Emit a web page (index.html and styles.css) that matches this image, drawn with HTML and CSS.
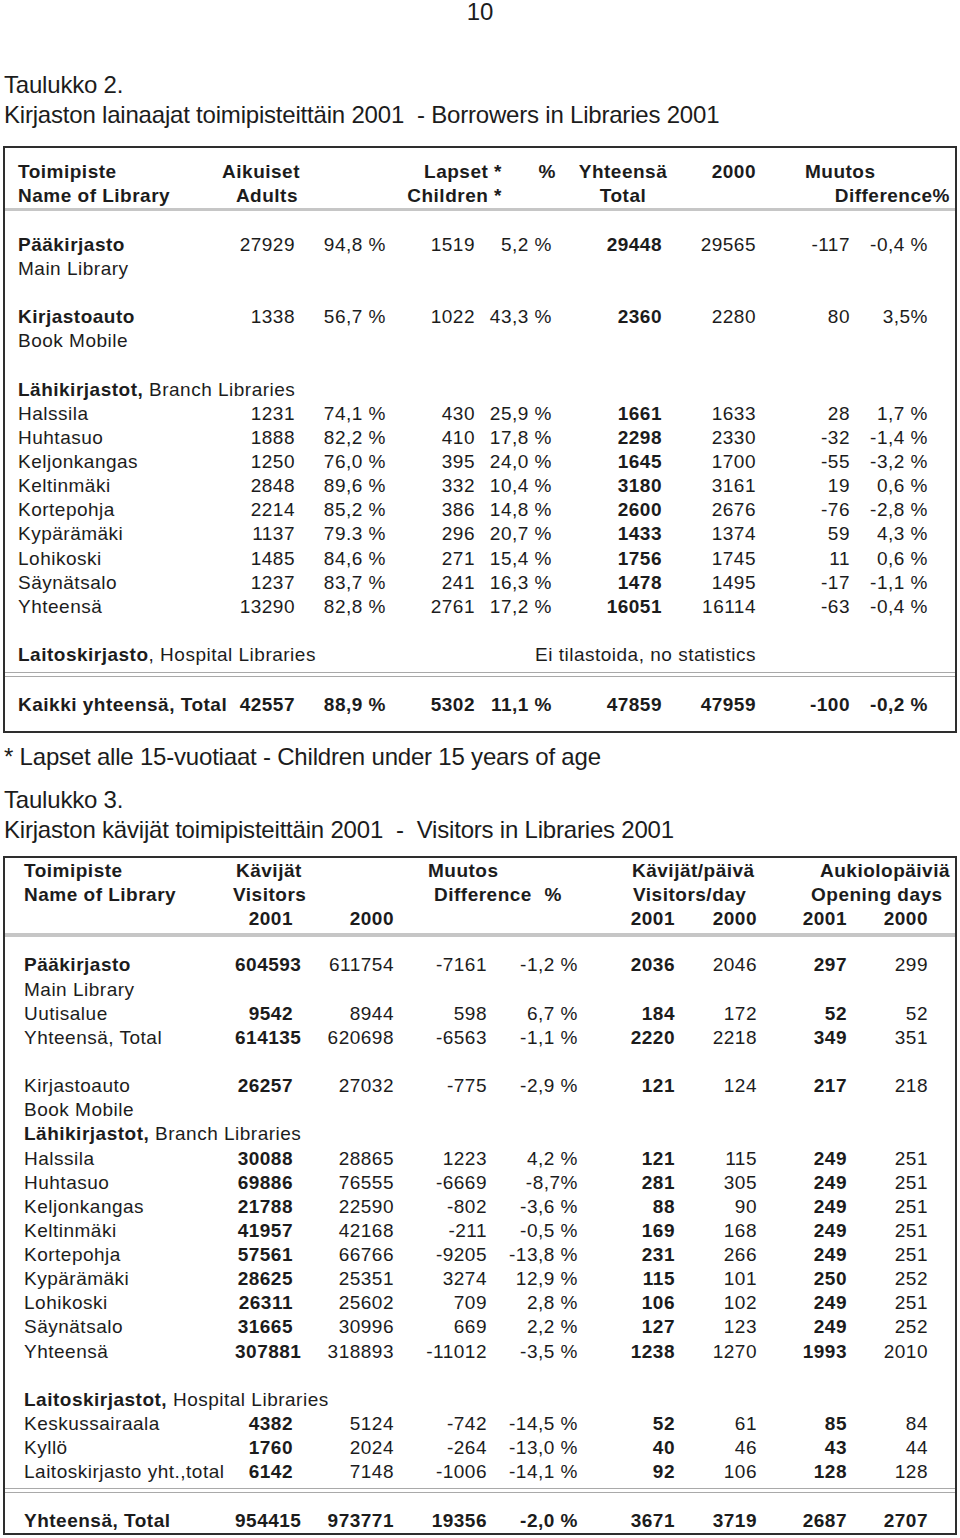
FILE: index.html
```html
<!DOCTYPE html>
<html lang="fi">
<head>
<meta charset="utf-8">
<title>Taulukko 2 ja 3</title>
<link rel="stylesheet" href="styles.css">
</head>
<body>
<div class="pageno">10</div>

<div class="caption cap1">
  <div>Taulukko 2.</div>
  <div>Kirjaston lainaajat toimipisteittäin 2001&nbsp; - Borrowers in Libraries 2001</div>
</div>

<section class="tbl t1">
  <div class="head">
    <span>Toimipiste</span><span class="r">Aikuiset</span><span class="r">Lapset *</span><span class="r">%</span><span class="c">Yhteensä</span><span class="r">2000</span><span class="muutos">Muutos</span>
    <span>Name of Library</span><span class="r adults">Adults</span><span class="r">Children *</span><span></span><span class="c">Total</span><span></span><span class="r">Difference%</span>
  </div>
  <div class="rule"></div>
  <div class="body">
    <span class="n b">Pääkirjasto</span><span>27929</span><span>94,8 %</span><span>1519</span><span>5,2 %</span><span class="b">29448</span><span>29565</span><span>-117</span><span>-0,4 %</span>
    <span class="full">Main Library</span>
    <span class="full"></span>
    <span class="n b">Kirjastoauto</span><span>1338</span><span>56,7 %</span><span>1022</span><span>43,3 %</span><span class="b">2360</span><span>2280</span><span>80</span><span>3,5%</span>
    <span class="full">Book Mobile</span>
    <span class="full"></span>
    <span class="full"><b>Lähikirjastot,</b> Branch Libraries</span>
    <span class="n">Halssila</span><span>1231</span><span>74,1 %</span><span>430</span><span>25,9 %</span><span class="b">1661</span><span>1633</span><span>28</span><span>1,7 %</span>
    <span class="n">Huhtasuo</span><span>1888</span><span>82,2 %</span><span>410</span><span>17,8 %</span><span class="b">2298</span><span>2330</span><span>-32</span><span>-1,4 %</span>
    <span class="n">Keljonkangas</span><span>1250</span><span>76,0 %</span><span>395</span><span>24,0 %</span><span class="b">1645</span><span>1700</span><span>-55</span><span>-3,2 %</span>
    <span class="n">Keltinmäki</span><span>2848</span><span>89,6 %</span><span>332</span><span>10,4 %</span><span class="b">3180</span><span>3161</span><span>19</span><span>0,6 %</span>
    <span class="n">Kortepohja</span><span>2214</span><span>85,2 %</span><span>386</span><span>14,8 %</span><span class="b">2600</span><span>2676</span><span>-76</span><span>-2,8 %</span>
    <span class="n">Kypärämäki</span><span>1137</span><span>79.3 %</span><span>296</span><span>20,7 %</span><span class="b">1433</span><span>1374</span><span>59</span><span>4,3 %</span>
    <span class="n">Lohikoski</span><span>1485</span><span>84,6 %</span><span>271</span><span>15,4 %</span><span class="b">1756</span><span>1745</span><span>11</span><span>0,6 %</span>
    <span class="n">Säynätsalo</span><span>1237</span><span>83,7 %</span><span>241</span><span>16,3 %</span><span class="b">1478</span><span>1495</span><span>-17</span><span>-1,1 %</span>
    <span class="n">Yhteensä</span><span>13290</span><span>82,8 %</span><span>2761</span><span>17,2 %</span><span class="b">16051</span><span>16114</span><span>-63</span><span>-0,4 %</span>
    <span class="full"></span>
    <span class="n laitos"><b>Laitoskirjasto</b>, Hospital Libraries</span><span class="eitil">Ei tilastoida, no statistics</span>
  </div>
  <div class="rule2"></div>
  <div class="body foot b">
    <span class="n">Kaikki yhteensä, Total</span><span>42557</span><span>88,9 %</span><span>5302</span><span>11,1 %</span><span>47859</span><span>47959</span><span>-100</span><span>-0,2 %</span>
  </div>
</section>

<div class="caption note">* Lapset alle 15-vuotiaat - Children under 15 years of age</div>

<div class="caption cap2">
  <div>Taulukko 3.</div>
  <div>Kirjaston kävijät toimipisteittäin 2001&nbsp; - &nbsp;Visitors in Libraries 2001</div>
</div>

<section class="tbl t2">
  <div class="head">
    <span>Toimipiste</span><span class="kav">Kävijät</span><span></span><span class="muu">Muutos</span><span></span><span class="kpv">Kävijät/päivä</span><span></span><span class="auk">Aukiolopäiviä</span><span></span>
    <span>Name of Library</span><span class="vis">Visitors</span><span></span><span class="dif">Difference</span><span class="r pct">%</span><span class="vpd">Visitors/day</span><span></span><span class="opd">Opening days</span><span></span>
    <span></span><span class="r">2001</span><span class="r">2000</span><span></span><span></span><span class="r">2001</span><span class="r">2000</span><span class="r">2001</span><span class="r">2000</span>
  </div>
  <div class="rule"></div>
  <div class="body">
    <span class="n b">Pääkirjasto</span><span class="b">604593</span><span>611754</span><span>-7161</span><span>-1,2 %</span><span class="b">2036</span><span>2046</span><span class="b">297</span><span>299</span>
    <span class="full">Main Library</span>
    <span class="n">Uutisalue</span><span class="b">9542</span><span>8944</span><span>598</span><span>6,7 %</span><span class="b">184</span><span>172</span><span class="b">52</span><span>52</span>
    <span class="n">Yhteensä, Total</span><span class="b">614135</span><span>620698</span><span>-6563</span><span>-1,1 %</span><span class="b">2220</span><span>2218</span><span class="b">349</span><span>351</span>
    <span class="full"></span>
    <span class="n">Kirjastoauto</span><span class="b">26257</span><span>27032</span><span>-775</span><span>-2,9 %</span><span class="b">121</span><span>124</span><span class="b">217</span><span>218</span>
    <span class="full">Book Mobile</span>
    <span class="full"><b>Lähikirjastot,</b> Branch Libraries</span>
    <span class="n">Halssila</span><span class="b">30088</span><span>28865</span><span>1223</span><span>4,2 %</span><span class="b">121</span><span>115</span><span class="b">249</span><span>251</span>
    <span class="n">Huhtasuo</span><span class="b">69886</span><span>76555</span><span>-6669</span><span>-8,7%</span><span class="b">281</span><span>305</span><span class="b">249</span><span>251</span>
    <span class="n">Keljonkangas</span><span class="b">21788</span><span>22590</span><span>-802</span><span>-3,6 %</span><span class="b">88</span><span>90</span><span class="b">249</span><span>251</span>
    <span class="n">Keltinmäki</span><span class="b">41957</span><span>42168</span><span>-211</span><span>-0,5 %</span><span class="b">169</span><span>168</span><span class="b">249</span><span>251</span>
    <span class="n">Kortepohja</span><span class="b">57561</span><span>66766</span><span>-9205</span><span>-13,8 %</span><span class="b">231</span><span>266</span><span class="b">249</span><span>251</span>
    <span class="n">Kypärämäki</span><span class="b">28625</span><span>25351</span><span>3274</span><span>12,9 %</span><span class="b">115</span><span>101</span><span class="b">250</span><span>252</span>
    <span class="n">Lohikoski</span><span class="b">26311</span><span>25602</span><span>709</span><span>2,8 %</span><span class="b">106</span><span>102</span><span class="b">249</span><span>251</span>
    <span class="n">Säynätsalo</span><span class="b">31665</span><span>30996</span><span>669</span><span>2,2 %</span><span class="b">127</span><span>123</span><span class="b">249</span><span>252</span>
    <span class="n">Yhteensä</span><span class="b">307881</span><span>318893</span><span>-11012</span><span>-3,5 %</span><span class="b">1238</span><span>1270</span><span class="b">1993</span><span>2010</span>
    <span class="full"></span>
    <span class="full"><b>Laitoskirjastot,</b> Hospital Libraries</span>
    <span class="n">Keskussairaala</span><span class="b">4382</span><span>5124</span><span>-742</span><span>-14,5 %</span><span class="b">52</span><span>61</span><span class="b">85</span><span>84</span>
    <span class="n">Kyllö</span><span class="b">1760</span><span>2024</span><span>-264</span><span>-13,0 %</span><span class="b">40</span><span>46</span><span class="b">43</span><span>44</span>
    <span class="n">Laitoskirjasto yht.,total</span><span class="b">6142</span><span>7148</span><span>-1006</span><span>-14,1 %</span><span class="b">92</span><span>106</span><span class="b">128</span><span>128</span>
  </div>
  <div class="rule2"></div>
  <div class="body foot b">
    <span class="n">Yhteensä, Total</span><span>954415</span><span>973771</span><span>19356</span><span>-2,0 %</span><span>3671</span><span>3719</span><span>2687</span><span>2707</span>
  </div>
</section>
</body>
</html>
```

FILE: styles.css
```css
* {
  box-sizing: border-box;
  margin: 0;
  padding: 0;
}

body {
  margin: 0;
  width: 960px;
  background: #ffffff;
  color: #1c1c1c;
  font-family: "Liberation Sans", Arial, sans-serif;
}

.pageno {
  height: 24px;
  font-size: 24px;
  line-height: 24px;
  text-align: center;
}

.caption {
  padding-left: 4px;
  font-size: 24px;
  line-height: 30px;
  letter-spacing: -0.2px;
  white-space: nowrap;
}

.cap1 { margin-top: 46px; }
.note { margin-top: 9px; }
.cap2 { margin-top: 13px; }

/* ---------- tables ---------- */
.tbl {
  width: 954px;
  margin-left: 3px;
  border: 2px solid #2e2e2e;
  font-size: 19px;
  letter-spacing: 0.5px;
  line-height: 24.15px;
}

.t1 { margin-top: 16px; }
.t2 { margin-top: 11px; }

.head,
.body {
  display: grid;
  grid-auto-rows: 24.15px;
  white-space: nowrap;
}

.head { font-weight: bold; }

.head > span,
.body > span {
  white-space: nowrap;
}

.body > span { text-align: right; }
.body > .n,
.body > .full { text-align: left; }

.full { grid-column: 1 / -1; }

.r { text-align: right; }
.c { text-align: center; }
.b { font-weight: bold; }

.rule {
  height: 3px;
  background: #c6c6c6;
}

.rule2 {
  height: 5px;
  border-top: 1px solid #a9a9a9;
  border-bottom: 1px solid #a9a9a9;
}

/* table 2 – borrowers */
.t1 .head {
  grid-template-columns: 200px 82px 202px 54px 134px 66px 194px;
  padding: 12px 5px 0 13px;
}

.t1 .head .adults { padding-right: 2px; }
.t1 .head .muutos { padding-left: 49px; }

.t1 .body {
  grid-template-columns: 217px 60px 91px 89px 77px 110px 94px 94px 78px;
  padding: 0 27px 0 13px;
}

.t1 .body:not(.foot) { padding-top: 21.5px; }
.t1 .rule2 { margin-top: 5px; }
.t1 .foot { padding-top: 15.5px; padding-bottom: 14px; }

.t1 .laitos { grid-column: 1 / 5; }
.t1 .eitil {
  grid-column: 5 / -1;
  text-align: left;
  padding-left: 60px;
}

/* table 3 – visitors */
.t2 .head,
.t2 .body {
  grid-template-columns: 211px 58px 101px 93px 91px 97px 82px 90px 81px;
  padding-left: 19px;
  padding-right: 27px;
}

.t2 .head { padding-top: 1px; }
.t2 .head .kav { padding-left: 1px; }
.t2 .head .vis { margin-left: -2px; }
.t2 .head .muu { padding-left: 34px; }
.t2 .head .dif { padding-left: 40px; }
.t2 .head .pct { padding-right: 16px; }
.t2 .head .kpv { padding-left: 54px; }
.t2 .head .vpd { padding-left: 55px; }
.t2 .head .auk { padding-left: 63px; }
.t2 .head .opd { padding-left: 54px; }

.t2 .rule { margin-top: 1.5px; height: 4px; }
.t2 .body:not(.foot) { padding-top: 16.5px; }
.t2 .rule2 { margin-top: 4px; }
.t2 .foot { padding-top: 15.5px; }
```
